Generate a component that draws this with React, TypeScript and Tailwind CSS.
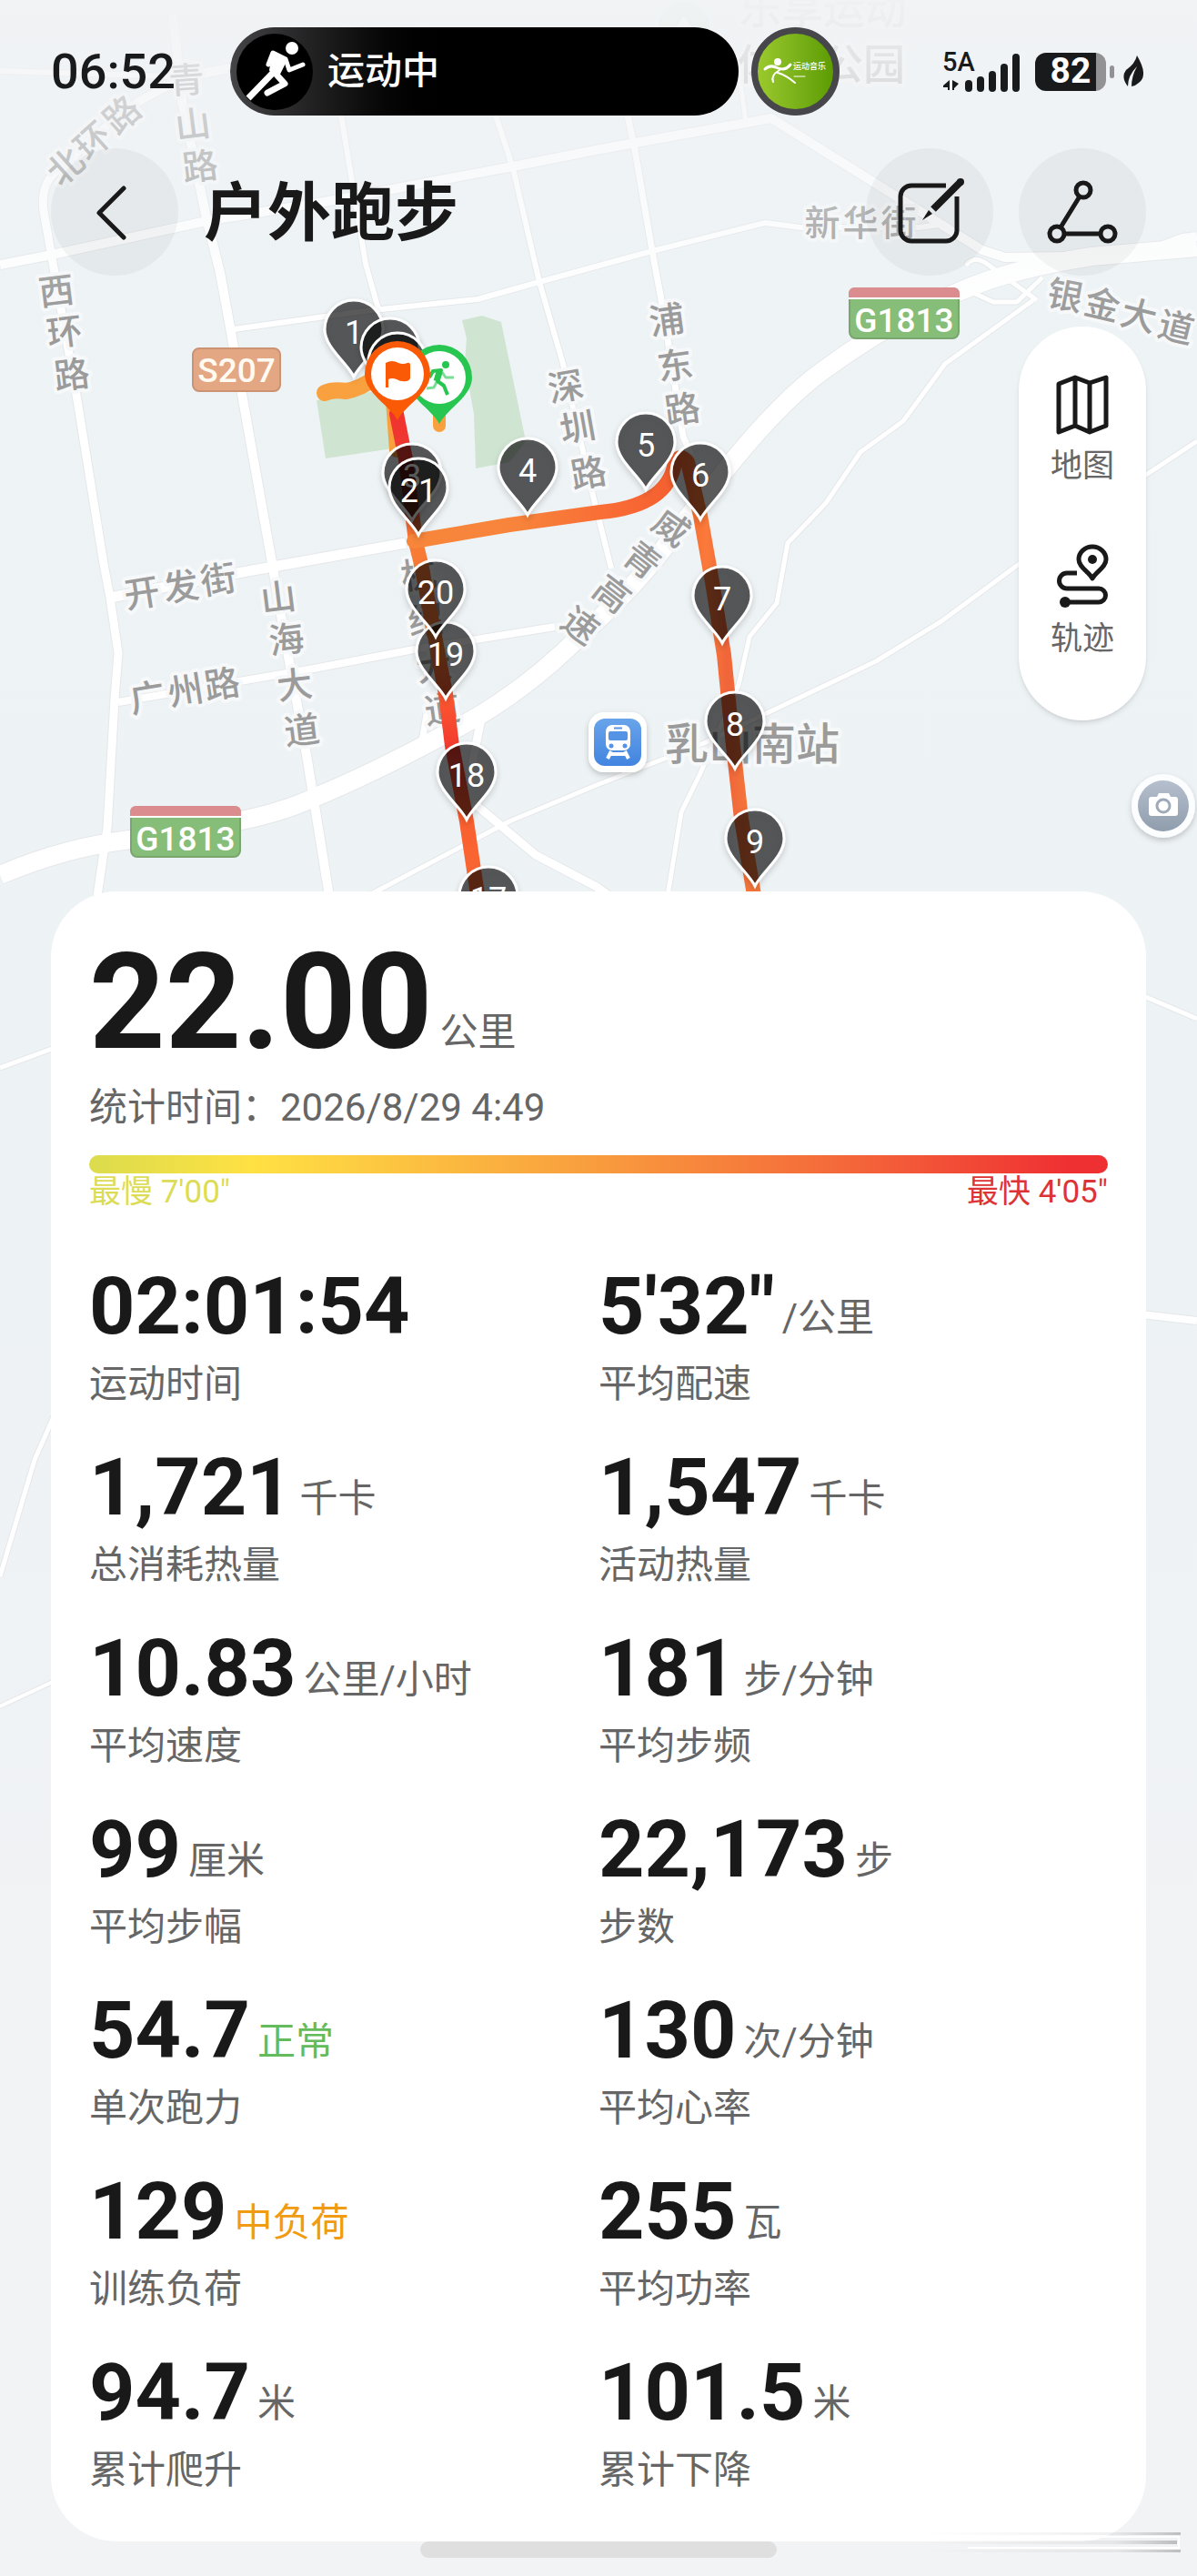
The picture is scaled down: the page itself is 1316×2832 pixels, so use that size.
import React from 'react';

interface Glyph {
  t: string;
  x: number;
  y: number;
  r: number;
}

interface Metric {
  value: string;
  unit?: string;
  unitClass?: string;
  label: string;
}

const metrics: Metric[] = [
  { value: '02:01:54', label: '运动时间' },
  { value: '5\'32"', unit: '/公里', label: '平均配速' },
  { value: '1,721', unit: '千卡', label: '总消耗热量' },
  { value: '1,547', unit: '千卡', label: '活动热量' },
  { value: '10.83', unit: '公里/小时', label: '平均速度' },
  { value: '181', unit: '步/分钟', label: '平均步频' },
  { value: '99', unit: '厘米', label: '平均步幅' },
  { value: '22,173', unit: '步', label: '步数' },
  { value: '54.7', unit: '正常', unitClass: 'text-[#64bb5c]', label: '单次跑力' },
  { value: '130', unit: '次/分钟', label: '平均心率' },
  { value: '129', unit: '中负荷', unitClass: 'text-[#f19b12]', label: '训练负荷' },
  { value: '255', unit: '瓦', label: '平均功率' },
  { value: '94.7', unit: '米', label: '累计爬升' },
  { value: '101.5', unit: '米', label: '累计下降' },
];

// [path, width]
const roads: [string, number][] = [
  ['M0 78 L190 84 L270 70', 6],
  ['M250 76 Q170 88 110 145 L60 190 Q44 205 48 232 L57 283 L85 440 L114 620 L121 657 L130 718 L126 768 L118 910 L107 985', 9],
  ['M0 291 L57 280 L227 243 L362 221 L564 183 L660 164 L848 130 L1000 225 L1080 275 L1105 283 L1250 281 L1300 262 L1316 260', 10],
  ['M190 15 L200 110 L227 240 L242 300 L253 360 L301 630 L313 700 L337 830 L362 985', 10],
  ['M375 127 L388 205 L402 290 L416 340', 6],
  ['M545 127 L564 185 L593 310 L619 400 L652 545 L672 625', 6],
  ['M257 362 L400 342 L525 329 L600 308 L717 276 L841 245 L880 250 L1010 250 L1040 246', 6],
  ['M810 60 L820 135', 5],
  ['M690 127 L698 165 L717 276 L728 335 L751 480 L760 500', 7],
  ['M121 657 L261 630 L446 597', 11],
  ['M130 772 L345 735 L455 714 L610 689', 8],
  ['M1062 292 Q1070 280 1085 290 L1140 330 M1066 320 L1092 332 L1118 332 L1146 305 M1136 330 L1039 400 L993 463 L946 497 L908 553 L866 597 L854 663 L824 700 L812 753 L770 850 L749 893 L734 985', 5],
  ['M1316 485 L1260 522 L1119 621 L1035 683 L963 727 L841 785 L774 817 L656 863 L560 903 L404 985', 5],
  ['M520 882 L589 940 L656 975 L690 1000', 9],
  ['M530 785 L519 840', 9],
  ['M463 820 L470 780', 7],
  ['M1316 272 L1200 282 Q1110 296 1056 320 Q980 352 904 408 Q860 440 803 510 L743 585 Q700 645 640 697 Q570 768 484 810 Q410 850 345 877 Q300 898 230 908 L143 923 Q70 932 0 962', 20],
  ['M0 1174 L60 1152', 5],
  ['M60 1555 L38 1605 L0 1733', 5],
  ['M1255 1094 L1316 1120', 5],
  ['M1255 1445 L1316 1452', 8],
  ['M0 1876 L60 1848', 4],
];

const labels: Glyph[] = [
  { t: '北', x: 72, y: 183, r: -42 }, { t: '环', x: 102, y: 155, r: -42 }, { t: '路', x: 134, y: 126, r: -42 },
  { t: '青', x: 205, y: 88, r: -4 }, { t: '山', x: 212, y: 137, r: -7 }, { t: '路', x: 220, y: 183, r: -7 },
  { t: '西', x: 62, y: 320, r: -7 }, { t: '环', x: 71, y: 365, r: -7 }, { t: '路', x: 79, y: 412, r: -7 },
  { t: '深', x: 622, y: 425, r: -10 }, { t: '圳', x: 635, y: 470, r: -10 }, { t: '路', x: 647, y: 520, r: -10 },
  { t: '浦', x: 733, y: 352, r: -8 }, { t: '东', x: 742, y: 402, r: -8 }, { t: '路', x: 750, y: 450, r: -8 },
  { t: '威', x: 738, y: 580, r: 36 }, { t: '青', x: 706, y: 616, r: 38 }, { t: '高', x: 673, y: 653, r: 38 }, { t: '速', x: 638, y: 688, r: 36 },
  { t: '开', x: 156, y: 652, r: -9 }, { t: '发', x: 199, y: 645, r: -9 }, { t: '街', x: 240, y: 637, r: -9 },
  { t: '广', x: 162, y: 767, r: -9 }, { t: '州', x: 204, y: 759, r: -9 }, { t: '路', x: 244, y: 752, r: -9 },
  { t: '山', x: 306, y: 657, r: -7 }, { t: '海', x: 315, y: 703, r: -7 }, { t: '大', x: 324, y: 753, r: -7 }, { t: '道', x: 332, y: 803, r: -7 },
  { t: '杭', x: 460, y: 632, r: -8 }, { t: '绍', x: 468, y: 682, r: -8 }, { t: '大', x: 477, y: 733, r: -8 }, { t: '道', x: 486, y: 780, r: -8 },
  { t: '新', x: 904, y: 245, r: 0 }, { t: '华', x: 946, y: 245, r: 0 }, { t: '街', x: 988, y: 245, r: 0 },
  { t: '银', x: 1171, y: 325, r: 11 }, { t: '金', x: 1212, y: 335, r: 13 }, { t: '大', x: 1252, y: 347, r: 14 }, { t: '道', x: 1293, y: 360, r: 14 },
];

// x and y are the tip of each kilometre pin
const pins = [
  { n: '1', x: 389, y: 414 },
  { n: '', x: 429, y: 434 },
  { n: '2', x: 437, y: 450 },
  { n: '3', x: 453, y: 572 },
  { n: '4', x: 580, y: 566 },
  { n: '5', x: 710, y: 538 },
  { n: '6', x: 770, y: 571 },
  { n: '7', x: 794, y: 707 },
  { n: '8', x: 808, y: 845 },
  { n: '9', x: 830, y: 974 },
  { n: '17', x: 537, y: 1037 },
  { n: '18', x: 513, y: 901 },
  { n: '19', x: 490, y: 768 },
  { n: '20', x: 479, y: 700 },
  { n: '21', x: 460, y: 588 },
];

const PIN = 'M0 0 C-7 -15 -32 -32 -32 -52 A32 32 0 0 1 32 -52 C32 -32 7 -15 0 0 Z';

function HighwayBadge({ x, y }: { x: number; y: number }) {
  return (
    <g transform={`translate(${x} ${y})`}>
      <rect x="1" y="1" width="120" height="55" rx="7" fill="#86be79" stroke="#79a56e" strokeWidth="2" />
      <path d="M0 11 V7 Q0 0 7 0 H115 Q122 0 122 7 V11 Z" fill="#da8c8e" />
      <path d="M0 12 H122" stroke="#fff" strokeWidth="2" />
      <text x="61" y="49" textAnchor="middle" fontSize="37" fontWeight="500" fill="#fff">G1813</text>
    </g>
  );
}

function RouteMap() {
  return (
    <svg
      className="absolute inset-0 h-full w-full"
      viewBox="0 0 1316 2832"
      preserveAspectRatio="xMidYMin slice"
      aria-label="跑步轨迹"
    >
      <defs>
        <linearGradient id="land" x1="0" y1="0" x2="0" y2="1">
          <stop offset="0" stopColor="#eef3f6" />
          <stop offset="0.5" stopColor="#edf2f5" />
          <stop offset="0.75" stopColor="#f1f3f5" />
        </linearGradient>
        <linearGradient id="fade" x1="0" y1="0" x2="0" y2="1">
          <stop offset="0" stopColor="#f1f3f5" stopOpacity="0.95" />
          <stop offset="0.3" stopColor="#f1f3f5" stopOpacity="0.65" />
          <stop offset="0.65" stopColor="#f0f3f5" stopOpacity="0.35" />
          <stop offset="1" stopColor="#eef2f5" stopOpacity="0" />
        </linearGradient>
        <linearGradient id="south" gradientUnits="userSpaceOnUse" x1="0" y1="450" x2="0" y2="985">
          <stop offset="0" stopColor="#f0322f" />
          <stop offset="0.12" stopColor="#ef3a30" />
          <stop offset="0.27" stopColor="#f77a35" />
          <stop offset="0.5" stopColor="#f77a35" />
          <stop offset="0.6" stopColor="#fb5530" />
          <stop offset="0.7" stopColor="#f2382f" />
          <stop offset="0.85" stopColor="#f9602f" />
          <stop offset="1" stopColor="#f96a35" />
        </linearGradient>
        <linearGradient id="east" gradientUnits="userSpaceOnUse" x1="455" y1="0" x2="829" y2="0">
          <stop offset="0" stopColor="#f7863b" />
          <stop offset="0.3" stopColor="#f7843a" />
          <stop offset="0.6" stopColor="#f96a35" />
          <stop offset="0.76" stopColor="#f4602f" />
          <stop offset="0.86" stopColor="#fb7a3a" />
          <stop offset="0.92" stopColor="#f0653a" />
          <stop offset="1" stopColor="#f5793a" />
        </linearGradient>
        <linearGradient id="metro" x1="0" y1="0" x2="0" y2="1">
          <stop offset="0" stopColor="#68a4ea" />
          <stop offset="1" stopColor="#4284e0" />
        </linearGradient>
        <linearGradient id="camera" x1="0" y1="0" x2="0" y2="1">
          <stop offset="0" stopColor="#b6bfce" />
          <stop offset="1" stopColor="#8f9dad" />
        </linearGradient>
        <filter id="shadow" x="-30%" y="-30%" width="160%" height="160%">
          <feDropShadow dx="0" dy="3" stdDeviation="3" floodOpacity="0.2" />
        </filter>
      </defs>

      <rect width="1316" height="2832" fill="url(#land)" />
      <g fill="#cfe5d2">
        <path d="M348 440 L425 428 L432 493 L358 504 Z" />
        <path d="M508 352 L530 347 L551 354 L578 485 L560 508 L523 515 L521 455 L511 400 L513 372 Z" />
      </g>
      <g fill="none" strokeLinejoin="round">
        {roads.map(([d, w]) => (
          <path key={d} d={d} stroke="#e5e7ea" strokeWidth={w + 2} />
        ))}
        {roads.map(([d, w]) => (
          <path key={d} d={d} stroke="#fff" strokeWidth={w} />
        ))}
      </g>

      <g fontSize="39" fontWeight="500" fill="#9b9b9b" stroke="#f6f8f9" strokeWidth="8" strokeLinejoin="round" paintOrder="stroke" textAnchor="middle">
        {labels.map((g) => (
          <text key={`${g.x}-${g.y}`} x="0" y="14" transform={`translate(${g.x} ${g.y}) rotate(${g.r})`}>
            {g.t}
          </text>
        ))}
        <text x="905" y="26" fontSize="46" opacity="0.5">乐享运动</text>
        <text x="903" y="87" fontSize="46" opacity="0.75">体育公园</text>
        <text x="827" y="835" fontSize="48">乳山南站</text>
      </g>
      <circle cx="752" cy="30" r="28" fill="#cfe5d2" />
      <path d="M738 38 L752 18 L766 38 Z" fill="#fff" />
      <rect width="1316" height="340" fill="url(#fade)" />

      <g>
        <rect x="212" y="383" width="96" height="47" rx="7" fill="#e3a883" stroke="#cb9273" strokeWidth="2" />
        <text x="260" y="420" textAnchor="middle" fontSize="37" fontWeight="500" fill="#fffaf2">S207</text>
      </g>
      <HighwayBadge x={933} y={316} />
      <HighwayBadge x={143} y={886} />

      <g transform="translate(647 783)">
        <rect width="64" height="66" rx="17" fill="#fff" filter="url(#shadow)" />
        <rect x="6" y="7" width="52" height="52" rx="12" fill="url(#metro)" />
        <rect x="19" y="14" width="27" height="28" rx="7" fill="#fff" />
        <rect x="22" y="21" width="21" height="10" rx="2" fill="#5593e5" />
        <path d="M28 17.500 H37" stroke="#5593e5" strokeWidth="2" />
        <circle cx="25" cy="37" r="2.500" fill="#5593e5" />
        <circle cx="40" cy="37" r="2.500" fill="#5593e5" />
        <path d="M25 43 L21 51 M40 43 L44 51 M24 46 H41" stroke="#fff" strokeWidth="4" />
      </g>

      <g fill="none" strokeWidth="16" strokeLinecap="round" strokeLinejoin="round">
        <path d="M357 432 Q366 428 380 430 Q395 428 415 414" stroke="#f9a13e" strokeWidth="18" />
        <path d="M432 440 L436 495" stroke="#f9a13e" />
        <path d="M483 452 V468" stroke="#f9a13e" strokeWidth="14" />
        <path d="M436 455 L446 505 L457 596 L463 620 L490 763 L497 820 L513 903 L526 990" stroke="url(#south)" />
        <path d="M455 595 L560 577 L660 563 Q735 556 742 508 Q748 498 756 508 L770 567 L783 640 L796 720 L806 820 L815 900 L830 990" stroke="url(#east)" />
      </g>

      {pins.map((p) => (
        <g key={`${p.n}-${p.x}`} transform={`translate(${p.x} ${p.y})`}>
          <path d={PIN} fill="#000" fillOpacity="0.6" stroke="#fff" strokeWidth="3" filter="url(#shadow)" />
          <text y="-36" textAnchor="middle" fontSize="36" fill="#fff">{p.n}</text>
        </g>
      ))}

      <g transform="translate(483 466)">
        <path d="M0 0 C-8 -16 -36 -30 -36 -51 A36 36 0 0 1 36 -51 C36 -30 8 -16 0 0 Z" fill="#27c650" />
        <circle cy="-51" r="29" fill="#fff" />
        <circle cx="7" cy="-65" r="4" fill="#27c650" />
        <path d="M-11 -51 L-7 -58 L2 -59 L-2 -47 L5 -42 L9 -32" fill="none" stroke="#27c650" strokeWidth="4" strokeLinejoin="round" />
        <path d="M0 -57 L-3 -47" stroke="#27c650" strokeWidth="7" />
        <path d="M3 -57 L7 -51 L16 -51 M-3 -46 L-6 -40 L-14 -39" fill="none" stroke="#27c650" strokeOpacity="0.6" strokeWidth="3" strokeLinejoin="round" />
      </g>
      <g transform="translate(437 462)">
        <path d="M0 0 C-8 -16 -36 -30 -36 -51 A36 36 0 0 1 36 -51 C36 -30 8 -16 0 0 Z" fill="#fa5a05" />
        <circle cy="-51" r="29" fill="#fff" />
        <path d="M-13 -63 Q-6 -67 1 -63 Q6 -61 11 -63 Q14 -64 14 -60 V-47 Q14 -44 10 -43 Q4 -42 -1 -45 Q-6 -47 -10 -45 V-36 H-13 Z" fill="#fa5a05" />
      </g>

      <g transform="translate(1279 886)">
        <circle r="35" fill="#fcfdfe" filter="url(#shadow)" />
        <circle r="28" fill="url(#camera)" />
        <path d="M-13 -10 H-7 L-5 -14 H6 L8 -10 H13 Q16 -10 16 -7 V8 Q16 11 13 11 H-13 Q-16 11 -16 8 V-7 Q-16 -10 -13 -10 Z" fill="#fff" />
        <circle r="7" fill="none" stroke="#9eaab9" strokeWidth="3" />
      </g>
    </svg>
  );
}

function StatusBar() {
  return (
    <div className="flex h-[97px] items-center pr-[59px] pl-14">
      <time className="w-[197px] text-[54px] leading-none font-medium text-[#191a1b]">06:52</time>
      <div className="flex h-full w-[559px] items-center rounded-full bg-linear-to-r from-[#454547] via-black via-45% to-black pl-[7px]">
        <svg className="h-[84px] w-[84px]" viewBox="0 0 84 84" fill="none" stroke="#fff" strokeWidth="7" strokeLinejoin="round">
          <circle cx="42" cy="42" r="42" fill="#000" stroke="none" />
          <circle cx="61" cy="16" r="7" fill="#fff" stroke="none" />
          <path d="M42 22 L54 28 L46 44 L38 40 Z" fill="#fff" strokeWidth="4" />
          <path d="M35 34 L40 21 L54 28 L58 40 L73 34" strokeWidth="5" strokeLinecap="round" />
          <path d="M43 40 L13 71" strokeWidth="7" />
          <path d="M43 44 L53 55 L34 65" strokeLinecap="round" />
        </svg>
        <span className="ml-4 text-[41px] leading-none font-medium text-white">运动中</span>
      </div>
      <div className="ml-3.5 flex h-[97px] w-[97px] items-center justify-center rounded-full border-[7px] border-[#47474b] bg-linear-to-r from-[#9ac92c] to-[#5d9c02]">
        <svg className="h-[84px] w-[84px] shrink-0" viewBox="0 0 84 84" fill="none" stroke="#fff" strokeLinecap="round">
          <circle cx="22" cy="31" r="4" fill="#fff" stroke="none" />
          <path d="M8 39 Q13 34 20 37 Q30 42 36 34" strokeWidth="3" />
          <path d="M24 40 Q14 46 17 53 M22 43 Q32 46 41 54" strokeWidth="2" />
          <text x="39" y="39" fontSize="9" fontWeight="500" fill="#fff" stroke="none">运动音乐</text>
          <path d="M40 47 H52" strokeWidth="1" />
        </svg>
      </div>
      <div className="ml-auto flex items-center text-[#191a1b]">
        <svg className="h-[46px] w-[86px]" viewBox="0 0 86 46" fill="currentColor" aria-label="5A">
          <text x="0" y="22" fontSize="29" fontWeight="500">5A</text>
          <path d="M1 38 L8 32 V43 L6 43 V40 H1 Z M18 36 L11 32 V43 H13 V41 Z" />
          <rect x="25" y="32" width="8" height="13" rx="4" />
          <rect x="38" y="28" width="8" height="17" rx="4" />
          <rect x="51" y="22" width="8" height="23" rx="4" />
          <rect x="64" y="14" width="8" height="31" rx="4" />
          <rect x="77" y="3" width="8" height="42" rx="4" />
        </svg>
        <div className="ml-4 flex h-[42px] w-[78px] items-center justify-center overflow-hidden rounded-xl bg-linear-to-r from-[#191a1b] from-86% to-[#929295] to-86% text-[39px] leading-none font-bold text-white">
          82
        </div>
        <div className="ml-1 h-3.5 w-[5px] rounded-full bg-[#929295]" />
        <svg className="ml-2.5 h-9 w-[22px]" viewBox="0 0 22 36" fill="currentColor">
          <path d="M15 0 Q28 22 17 30 Q14 33 9 34 Q9 23 15 12 Q5 22 5 34 Q-3 24 3 16 Q13 9 15 0 Z" />
        </svg>
      </div>
    </div>
  );
}

export default function App() {
  return (
    <div className="relative min-h-screen overflow-hidden bg-[#f1f3f5] font-['Roboto','Noto_Sans_CJK_SC',sans-serif] text-[#191919]">
      <RouteMap />

      <div className="relative flex flex-col pt-[30px]">
        <StatusBar />

        <header className="mt-9 flex items-center px-14">
          <button type="button" aria-label="返回" className="h-[140px] w-[140px] rounded-full bg-black/4">
            <svg viewBox="0 0 140 140" fill="none" stroke="currentColor" strokeWidth="5" strokeLinecap="round" strokeLinejoin="round">
              <path d="M80 44 L53 71 L80 98" />
            </svg>
          </button>
          <h1 className="ml-7 pt-1 text-[70px] leading-[100px] font-bold">户外跑步</h1>
          <button type="button" aria-label="编辑" className="ml-auto h-[140px] w-[140px] rounded-full bg-black/4">
            <svg viewBox="0 0 140 140" fill="none" stroke="currentColor" strokeWidth="5">
              <path d="M88 41 H50 a12 12 0 0 0 -12 12 V90 a12 12 0 0 0 12 12 H88 a12 12 0 0 0 12 -12 V53" />
              <path d="M104 37 L74 67" strokeWidth="8" />
              <circle cx="104" cy="37" r="4" fill="currentColor" stroke="none" />
              <path d="M69 68 L73 72 L62 79 Z" fill="currentColor" stroke="none" />
            </svg>
          </button>
          <button type="button" aria-label="分享" className="ml-7 h-[140px] w-[140px] rounded-full bg-black/4">
            <svg viewBox="0 0 140 140" fill="none" stroke="currentColor" strokeWidth="5">
              <circle cx="71" cy="46" r="8" />
              <circle cx="42" cy="94" r="8" />
              <circle cx="98" cy="94" r="8" />
              <path d="M67 53 L46 87 M50 94 H90" />
            </svg>
          </button>
        </header>

        <nav className="mt-14 mr-14 flex h-[433px] w-[140px] flex-col items-center gap-[60px] self-end rounded-full bg-white pt-[53px] text-[35px] leading-[50px] text-[#666] shadow-md">
          <button type="button" className="flex flex-col items-center gap-2.5">
            <svg className="h-[66px] w-[58px] text-[#191919]" viewBox="0 0 58 66" fill="none" stroke="currentColor" strokeWidth="5" strokeLinejoin="round">
              <path d="M3 10 L21 3 L37 9 L55 3 V56 L37 63 L21 56 L3 63 Z M21 3 V56 M37 9 V63" />
            </svg>
            地图
          </button>
          <button type="button" className="flex flex-col items-center gap-2.5">
            <svg className="h-[70px] w-[58px] text-[#191919]" viewBox="0 0 58 70" fill="none" stroke="currentColor" strokeWidth="5">
              <path d="M40 38 C36 30 25 26 25 17 A15 14 0 0 1 55 17 C55 26 44 30 40 38 Z" strokeLinejoin="round" />
              <circle cx="40" cy="17" r="5" fill="currentColor" stroke="none" />
              <path d="M23 32 H12 A8 8 0 0 0 12 49 H47 A7 7 0 0 1 47 64 H10" />
              <circle cx="10" cy="64" r="6" fill="currentColor" stroke="none" />
            </svg>
            轨迹
          </button>
        </nav>

        <main className="mx-14 mt-[188px] rounded-[72px] bg-white px-[42px] pt-[50px] pb-12">
          <p className="flex items-end gap-2">
            <span className="text-[146px] leading-[146px] font-bold">22.00</span>
            <span className="text-[42px] leading-[82px] text-[#666]">公里</span>
          </p>
          <p className="mt-3 text-[42px] leading-[60px] text-[#666]">统计时间：2026/8/29 4:49</p>

          <div className="mt-[22px] h-5 rounded-full bg-[linear-gradient(90deg,#dbdc4d_0%,#ffe143_16%,#f9a03e_48%,#f4663a_75%,#ef3033_96%)]" />
          <div className="flex justify-between text-[35px] leading-[42px]">
            <span className="text-[#dcdc56]">最慢 7'00"</span>
            <span className="text-[#dc3436]">最快 4'05"</span>
          </div>

          <dl className="mt-[60px] grid grid-cols-2 gap-y-[39px]">
            {metrics.map((m) => (
              <div key={m.label} className="flex flex-col-reverse gap-[11px]">
                <dt className="text-[42px] leading-[61px] text-[#666]">{m.label}</dt>
                <dd className="flex items-end gap-2">
                  <span className="text-[88px] leading-[88px] font-bold">{m.value}</span>
                  {m.unit && (
                    <span className={`text-[42px] leading-[62px] ${m.unitClass ?? 'text-[#666]'}`}>{m.unit}</span>
                  )}
                </dd>
              </div>
            ))}
          </dl>
        </main>

        <div className="relative mx-auto mb-5 h-[18px] w-[392px] rounded-full bg-[#dfdfe0]" />
      </div>

      <svg className="absolute right-3 bottom-6 h-7 w-[360px]" viewBox="0 0 360 28" fill="none">
        <defs>
          <linearGradient id="streak" x1="0" y1="0" x2="1" y2="0">
            <stop offset="0.2" stopColor="#aaa" stopOpacity="0" />
            <stop offset="0.8" stopColor="#aaa" stopOpacity="0.3" />
            <stop offset="1" stopColor="#999" />
          </linearGradient>
        </defs>
        <rect y="4" width="354" height="3" fill="url(#streak)" opacity="0.6" />
        <rect y="13" width="350" height="4" fill="url(#streak)" opacity="0.6" />
        <rect y="23" width="354" height="3" fill="url(#streak)" opacity="0.6" />
        <path d="M120 9 H352 V21 H120" stroke="#fff" strokeWidth="2" />
      </svg>
    </div>
  );
}
